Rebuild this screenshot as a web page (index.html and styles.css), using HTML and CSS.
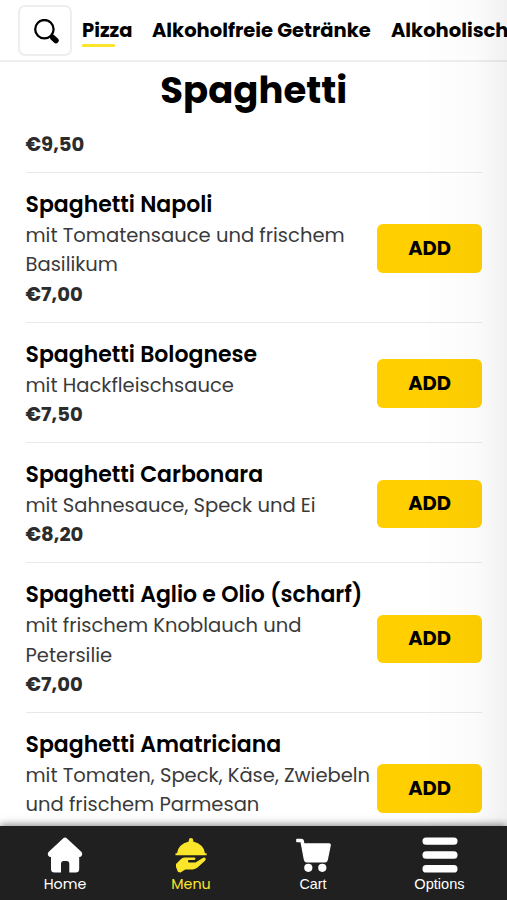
FILE: index.html
```html
<!DOCTYPE html>
<html lang="de">
<head>
<meta charset="utf-8">
<meta name="viewport" content="width=device-width, initial-scale=1">
<title>Spaghetti</title>
<link rel="stylesheet" href="styles.css">
</head>
<body>
<div class="app">
  <header class="topbar">
    <button class="search" aria-label="Suche">
      <svg width="26" height="26" viewBox="0 0 26 26"><circle cx="10.4" cy="10.2" r="9.2" fill="none" stroke="#000" stroke-width="2.3"/><path d="M17 16.8l1.7 1.7" stroke="#000" stroke-width="2.8"/><path d="M18.7 18.4l3.2 3.1" stroke="#000" stroke-width="5.6" stroke-linecap="round"/></svg>
    </button>
    <nav class="categories">
      <a class="category active">Pizza</a>
      <a class="category drinks">Alkoholfreie Getränke</a>
      <a class="category">Alkoholisch</a>
    </nav>
  </header>
  <main class="content">
    <h1 class="heading">Spaghetti</h1>
    <p class="price first">€9,50</p>
    <section class="item">
      <div class="info"><h2 class="name">Spaghetti Napoli</h2><p class="desc">mit Tomatensauce und frischem<br>Basilikum</p><p class="price">€7,00</p></div>
      <button class="add">ADD</button>
    </section>
    <section class="item">
      <div class="info"><h2 class="name">Spaghetti Bolognese</h2><p class="desc">mit Hackfleischsauce</p><p class="price">€7,50</p></div>
      <button class="add">ADD</button>
    </section>
    <section class="item">
      <div class="info"><h2 class="name">Spaghetti Carbonara</h2><p class="desc">mit Sahnesauce, Speck und Ei</p><p class="price">€8,20</p></div>
      <button class="add">ADD</button>
    </section>
    <section class="item">
      <div class="info"><h2 class="name">Spaghetti Aglio e Olio (scharf)</h2><p class="desc">mit frischem Knoblauch und<br>Petersilie</p><p class="price">€7,00</p></div>
      <button class="add">ADD</button>
    </section>
    <section class="item">
      <div class="info last"><h2 class="name">Spaghetti Amatriciana</h2><p class="desc">mit Tomaten, Speck, Käse, Zwiebeln<br>und frischem Parmesan</p></div>
      <button class="add">ADD</button>
    </section>
  </main>
  <div class="edge-shade"></div>
  <nav class="tabs">
    <a class="tab home">
      <svg width="36" height="36" viewBox="0 0 36 36" fill="currentColor"><path d="M16 1.4Q18 -.3 20 1.4L34.3 14.8Q35.8 16.5 34.8 18.5Q34 20 32.2 20V32Q32.2 35.5 28.7 35.5H22.3V26.5Q22.3 24 20 24H16.4Q14 24 14 26.5V35.5H7.5Q4 35.5 4 32V20Q2 20 1.2 18.4Q.2 16.4 1.8 14.8Z"/></svg>
      <span>Home</span>
    </a>
    <a class="tab menu">
      <svg width="36" height="36" viewBox="0 0 36 36" fill="currentColor"><path d="M4 16.3Q5 7.4 15.8 4.5V3.2Q15.8 1 18 1T20.2 3.2V4.5Q31 7.4 32 16.3H33.6V18.2H2.5V16.3Z"/><path d="M3 27L7.5 22.4Q9.2 20.6 11.5 20.6H21Q22.4 20.6 22.4 21.8T21 23H16.2Q15 23 15 24.3T16.2 25.6H22.5L29.3 21.3Q31.5 20 32.5 21.2Q33.2 22.2 32 23.7L24.5 30.6Q22.5 32.4 19.8 32.4H12.3L7.5 35.6L5 34.9L3 30Z"/></svg>
      <span>Menu</span>
    </a>
    <a class="tab cart">
      <svg width="36" height="36" viewBox="0 0 36 36" fill="currentColor"><path d="M1.8 2.3H6.6Q8 2.3 8.3 3.8L8.9 6.9H34.2Q35.5 6.9 35.2 8.4L32.3 22.6Q31.8 25 29 25H12.6Q10 25 9.4 22.6L6 4.6H1.8Z" stroke="currentColor" stroke-width="1.2" stroke-linejoin="round"/><circle cx="13.3" cy="30.8" r="4.1"/><circle cx="27.3" cy="30.8" r="4.1"/></svg>
      <span>Cart</span>
    </a>
    <a class="tab options">
      <svg width="36" height="36" viewBox="0 0 36 36" fill="currentColor"><rect x=".5" y=".5" width="35" height="7.3" rx="3.6"/><rect x=".5" y="14.3" width="35" height="7.5" rx="3.6"/><rect x=".5" y="28" width="35" height="7.5" rx="3.6"/></svg>
      <span>Options</span>
    </a>
  </nav>
</div>
</body>
</html>
```
FILE: styles.css
```css
* { box-sizing: border-box; margin: 0; padding: 0; }
body { background: #fff; overflow: hidden; font-family: Poppins, Inter, sans-serif; color: #000; }
.app { position: relative; height: 900px; display: flex; flex-direction: column; overflow: hidden; }
button { font-family: inherit; border: 0; }

.topbar { flex: none; height: 62px; display: flex; padding: 5px 0 0 18px; border-bottom: 2px solid #eee; overflow: hidden; }
.search { flex: none; width: 54px; height: 51px; padding: 3px 0 0 4px; border: 2px solid #eee; border-radius: 7px; background: #fff; display: flex; align-items: center; justify-content: center; }
.categories { display: flex; gap: 20px; padding: 10px 0 0 10px; white-space: nowrap; }
.category { font-size: 19.5px; line-height: 31px; font-weight: 700; height: 32px; }
.active { width: 50px; }
.active::after { content: ""; display: block; width: 33px; height: 2.5px; margin-top: -2px; border-radius: 1px; background: #f9e52d; }
.drinks { width: 219px; }

.content { flex: 1; min-height: 0; overflow: hidden; padding: 0 25px 0 25.5px; }
.heading { font-size: 37px; line-height: 56px; font-weight: 700; text-align: center; white-space: nowrap; }
.price { font-size: 19.6px; line-height: 29.4px; font-weight: 700; color: #2c2c2c; }
.first { margin-top: 12px; height: 42px; }
.item { display: flex; align-items: center; justify-content: space-between; border-top: 1px solid #e8e8e8; padding: 15px 0 12.5px; }
.info { flex: 1; min-width: 0; white-space: nowrap; }
.last { padding-bottom: 29.4px; }
.name { font-size: 22px; line-height: 33px; font-weight: 600; }
.desc { font-size: 19.55px; line-height: 29.4px; color: #3a3a3a; }
.add { flex: none; width: 105px; height: 48.5px; border-radius: 6px; background: #ffcf00; font-size: 19.5px; font-weight: 700; color: #000; }

.edge-shade { position: absolute; top: 0; right: 0; width: 87px; height: 826px; background: linear-gradient(90deg, rgba(0,0,0,0), rgba(0,0,0,.015) 65%, rgba(0,0,0,.055)); pointer-events: none; }

.tabs { flex: none; position: relative; height: 74px; background: #202020; display: flex; padding-left: 2px; box-shadow: 0 -1px 8px rgba(0,0,0,.5); }
.tab { width: 126px; display: flex; flex-direction: column; align-items: center; padding-top: 11px; color: #fff; font-size: 14.3px; line-height: 22px; }
.menu { color: #fae52b; }
.cart { width: 118px; }
.options { width: 135px; }
.cart, .options { font-family: "Liberation Sans", sans-serif; }
.options { font-size: 14.6px; }
```
